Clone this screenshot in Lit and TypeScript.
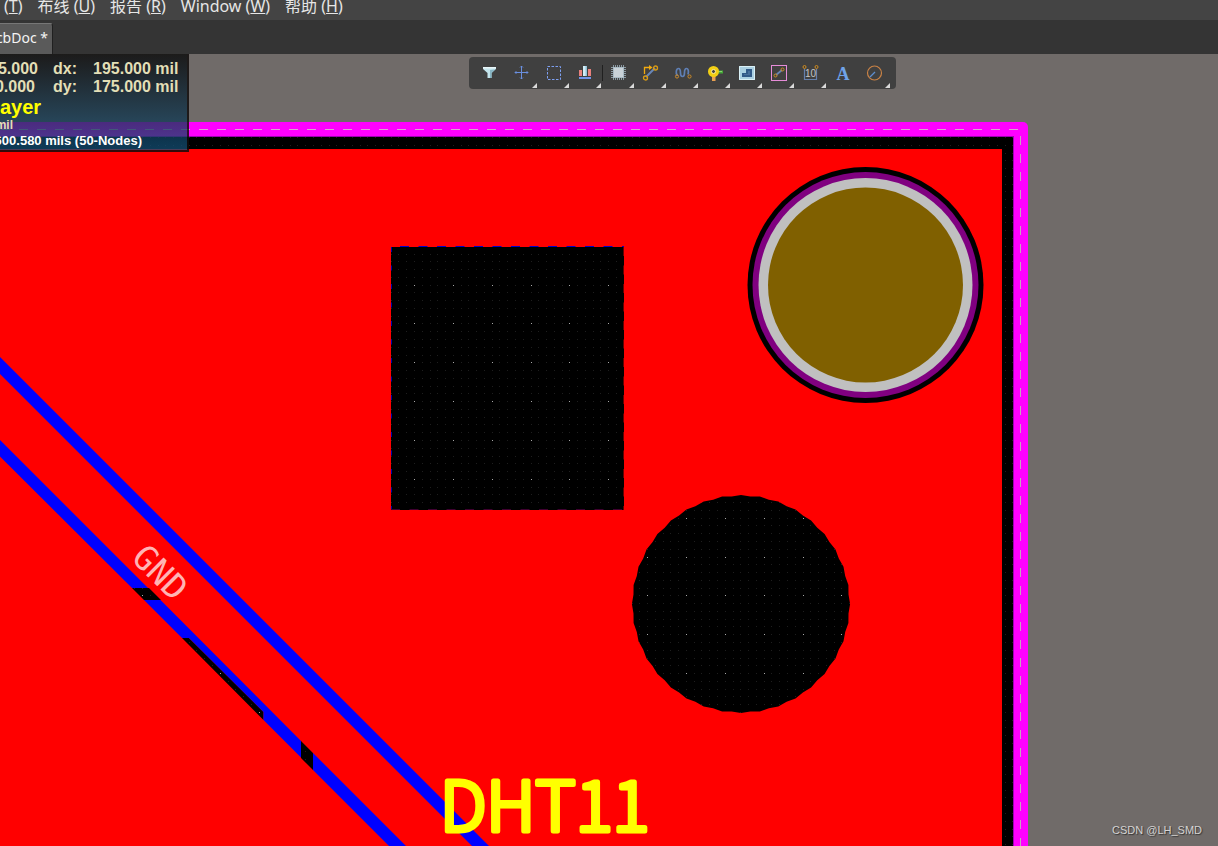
import { LitElement, html, svg, css } from "lit";
import { customElement } from "lit/decorators.js";

const GRID = 38.85;
const ORIGIN_X = 414.5;
const ORIGIN_Y = 285.1;

/** One-pixel marks for the snap grid; every fifth one is a major mark. */
function gridPath(major: boolean): string {
  let d = "";
  for (let i = -60; i <= 80; i++) {
    for (let j = -19; j <= 110; j++) {
      if ((i % 5 === 0 && j % 5 === 0) !== major) continue;
      const x = Math.floor(ORIGIN_X + (i * GRID) / 5);
      const y = Math.floor(ORIGIN_Y + (j * GRID) / 5);
      if (x < 0 || x > 1012) continue;
      d += `M${x} ${y}h1v1h-1z`;
    }
  }
  return d;
}

const MINOR = gridPath(false);
const MAJOR = gridPath(true);

/** Faceted outline of a round clearance. */
function facets(cx: number, cy: number, r: number, n: number): string {
  let d = "";
  for (let i = 0; i < n; i++) {
    const a = (i / n) * Math.PI * 2;
    const rr = i % 2 ? r - 0.6 : r + 0.6;
    d += `${i ? "L" : "M"}${(cx + rr * Math.cos(a)).toFixed(1)} ${(cy + rr * Math.sin(a)).toFixed(1)}`;
  }
  return d + "Z";
}

const HOLE = facets(741, 604, 108.5, 72);

@customElement("pcb-board")
class PcbBoard extends LitElement {
  static styles = css`
    :host { display: block; }
    svg { display: block; width: 100%; height: 100%; }
    .net { font: 34px "DejaVu Sans Mono", monospace; fill: #ffb4b4; }
    .silk {
      font: 300 69px "Noto Sans CJK SC", sans-serif;
      fill: #ff0;
      stroke: #ff0;
      stroke-width: 5px;
      stroke-linejoin: round;
    }
  `;
  render() {
    return html`<svg role="img" aria-label="PCB layout">
      <g transform="translate(0 -54)">
        <path d="M-20 122H1023a5 5 0 0 1 5 5V3000H-20z" fill="#f0f" />
        <path d="M-20 136H1014V3000H-20z" fill="#a000b4" />
        <path d="M-20 137H1013V3000H-20z" fill="#000" />
        <path d="M1 129.5H1020" stroke="#d9a6d0" stroke-dasharray="9 9" />
        <path d="M1020.5 136V3000" stroke="#c9a0c4" stroke-dasharray="9 9" />
        <path d=${MINOR} fill="#1e1e1e" shape-rendering="crispEdges" />
        <path d=${MAJOR} fill="#a8a8a8" shape-rendering="crispEdges" />
        <path fill="#f00" fill-rule="evenodd" d="M0 149H1002V3000H0z
          M391 247H624V510H391z
          M132 588H149L161 600H144z
          M182 638H189L263.500 712V720z
          M301 741V758L313 770V753z ${HOLE}" />
        <path d="M400 246.500H624" stroke="#00c" stroke-dasharray="9 9.500" />
        <path d="M391.500 247V510" stroke="#00a" stroke-dasharray="5 13.500" />
        <path d="M623.500 247V510" stroke="#600" stroke-dasharray="9 9.500" />
        <path d="M391 509.500H624" stroke="#400030" stroke-dasharray="9 9.500" />
        <g fill="#00f">
          <path d="M0 357L1000 1357V1374L0 374z" />
          <path d="M0 440L148 588H132L0 456.500z" />
          <path d="M160.500 600L301 741V757.500L263.500 720V712L189 638H182L144 600z" />
          <path d="M313 753L1000 1440V1457L313 770z" />
        </g>
        <g>
          <circle cx="865.500" cy="285" r="118" fill="#000" />
          <circle cx="865.500" cy="285" r="113" fill="#800080" />
          <circle cx="865.500" cy="285" r="107" fill="#c0c0c0" />
          <circle cx="865.500" cy="285" r="97.500" fill="#806000" />
        </g>
        <text class="net" transform="translate(130 559) rotate(45)">GND</text>
        <text class="silk" x="440" y="831">DHT11</text>
      </g>
    </svg>`;
  }
}

const ICONS: { name: string; menu: boolean; art: unknown }[] = [
  { name: "Selection filter", menu: false, art: svg`
    <path d="M2 3h13v2l-4.500 4v5h-4V9L2 5z" fill="#c3e4ec"/><path d="M2 3h13v1.500H2z" fill="#e9f6f9"/><path d="M9 6v8h1.500V9L14 5.500z" fill="#86b5c4"/>` },
  { name: "Move", menu: true, art: svg`
    <path d="M8.500 2v13M2 8.500h13" stroke="#6a8fe0"/><path d="M7 3.500l1.500-1.500L10 3.500M7 13.500l1.500 1.500 1.500-1.500M3.500 7L2 8.500 3.500 10M13.500 7L15 8.500 13.500 10" stroke="#6a8fe0" stroke-width=".8"/>` },
  { name: "Select area", menu: true, art: svg`
    <rect x="2.500" y="2.500" width="13" height="13" stroke="#7d9ff0" stroke-dasharray="2.500 1.500"/>` },
  { name: "Align", menu: true, art: svg`
    <path d="M2 6h3v6H2zM11 5h3v7h-3z" fill="#e9807c"/><path d="M6 2h4v10H6z" fill="#d3ecf5"/><path d="M8.500 2H10v10H8.500z" fill="#92c1d8"/><path d="M2 14h12" stroke="#7193e8" stroke-width="2"/>` },
  { name: "Place component", menu: true, art: svg`
    <path d="M3.500 1v15M5.500 1v15M7.500 1v15M9.500 1v15M11.500 1v15M13.500 1v15M1 3.500h15M1 5.500h15M1 7.500h15M1 9.500h15M1 11.500h15M1 13.500h15" stroke="#9eb1bd" stroke-width=".8"/><rect x="3.500" y="3.500" width="10" height="10" fill="#c9d2d8" stroke="#a9bac4"/>` },
  { name: "Interactive routing", menu: true, art: svg`
    <path d="M4 13l9-9" stroke="#6886b8" stroke-width="2"/><path d="M2.500 10V3.500H8" stroke="#f0aa10" stroke-width="1.300"/><path d="M7 1l3.500 2.500L7 6z" fill="#f0aa10"/><circle cx="3.500" cy="14" r="2" stroke="#d89a14" stroke-width="1.300"/><circle cx="13.500" cy="4" r="2" stroke="#d89a14" stroke-width="1.300"/>` },
  { name: "Length tuning", menu: true, art: svg`
    <path d="M3.500 12C1 9 2.500 4.500 4.500 4.500S6.500 7 6.500 9s.5 3.500 2 3.500 2-1.500 2-4 .5-4 2-4 2.500 2 1.500 6" stroke="#5f7fb4" stroke-width="1.700"/><circle cx="3" cy="12.500" r="1.600" stroke="#cc8a28"/><circle cx="15.500" cy="12.500" r="1.600" stroke="#cc8a28"/>` },
  { name: "Place via", menu: true, art: svg`
    <path d="M11 8h6" stroke="#44a938" stroke-width="3"/><path d="M12 7.500h4" stroke="#8ad070"/><path d="M6 11h3.500v6H6z" fill="#e8a050"/><circle cx="7.500" cy="7.500" r="5.500" fill="#f2cf14"/><circle cx="7.500" cy="7.500" r="2" fill="#454545" stroke="#fff09c"/>` },
  { name: "Place polygon", menu: true, art: svg`
    <path d="M1 2h16v14H1z" fill="#aad0e2"/><path d="M1.500 2.500h15v13h-15z" stroke="#d9f0f7"/><path d="M8 5h6v8H4V9h4z" fill="#315a88"/><path d="M10 7h2v4H6v-1h4z" fill="#48709c"/>` },
  { name: "Place region", menu: true, art: svg`
    <rect x="1.500" y="1.500" width="15" height="15" stroke="#e68cd8"/><path d="M6 11l6-5" stroke="#6684b4" stroke-width="1.800"/><circle cx="5.500" cy="11.500" r="1.500" stroke="#cf8c20"/><circle cx="12.500" cy="5.500" r="1.500" stroke="#cf8c20"/>` },
  { name: "Place dimension", menu: true, art: svg`
    <path d="M2.500 5v10.500h12V5" stroke="#657fac" stroke-width="1.200"/><circle cx="2.500" cy="3" r="1.500" stroke="#cf8c20"/><circle cx="14.500" cy="3" r="1.500" stroke="#cf8c20"/><text class="num" x="8.500" y="13" text-anchor="middle">10</text>` },
  { name: "Place text", menu: false, art: svg`<text class="letter" x="9" y="16" text-anchor="middle">A</text>` },
  { name: "Place arc", menu: true, art: svg`
    <circle cx="8.500" cy="9" r="7" stroke="#c98245" stroke-width="1.200"/><path d="M4 13l5-5" stroke="#5d8fd0" stroke-width="1.300"/>` },
];

@customElement("app-root")
class AppRoot extends LitElement {
  static styles = css`
    :host {
      display: flex;
      flex-direction: column;
      height: 100vh;
      overflow: hidden;
      background: #706b69;
      font-family: "Noto Sans", "Noto Sans CJK SC", sans-serif;
    }
    nav {
      display: flex;
      align-items: flex-start;
      gap: 15px;
      height: 20px;
      padding-left: 4px;
      background: #444;
      flex: none;
    }
    nav a {
      color: #e6e6e6;
      font-size: 16px;
      line-height: 12px;
      text-decoration: none;
      white-space: nowrap;
    }
    .tabs {
      display: flex;
      align-items: flex-end;
      height: 34px;
      background: #343434;
      flex: none;
    }
    .tab {
      display: flex;
      justify-content: flex-end;
      align-items: center;
      width: 53px;
      height: 31px;
      padding: 0 4px 3px 0;
      box-sizing: border-box;
      overflow: hidden;
      border: 0;
      border-top: 1px solid #777;
      border-right: 1px solid #202020;
      border-radius: 0 3px 0 0;
      background: #5a5a5a;
      color: #f4f4f4;
      font: 14px "Noto Sans", sans-serif;
      white-space: nowrap;
    }
    main {
      position: relative;
      flex: 1;
      min-height: 0;
      overflow: hidden;
    }
    pcb-board { width: 100%; height: 100%; }
    .hud {
      position: absolute;
      left: 0;
      top: 0;
      width: 189px;
      height: 98px;
      box-sizing: border-box;
      padding-top: 6px;
      border: solid rgba(15, 12, 12, 0.85);
      border-width: 0 2px 2px 0;
      background: linear-gradient(rgba(0, 0, 0, 0.75), rgba(20, 80, 118, 0.75)) padding-box;
      color: #e3dfb6;
      font: bold 16px "Liberation Sans", sans-serif;
      overflow: hidden;
    }
    .coords { display: grid; grid-template-columns: 53px 40px 1fr; line-height: 18px; white-space: nowrap; }
    .abs { display: flex; justify-content: flex-end; padding-right: 15px; }
    .abs.short { padding-right: 18px; }
    .layer { color: #ff0; font-size: 20px; line-height: 22px; }
    .snap { display: flex; justify-content: flex-end; width: 13px; font-size: 12px; line-height: 15px; }
    .object { display: flex; justify-content: flex-end; width: 142px; color: #fff; font-size: 13px; line-height: 15px; white-space: nowrap; }
    .toolbar {
      position: absolute;
      top: 3px;
      left: 50%;
      margin-left: -140px;
      display: flex;
      height: 32px;
      padding: 0 5px;
      border-radius: 4px;
      background: #404040;
    }
    .tool {
      position: relative;
      display: flex;
      width: 32px;
      height: 32px;
      padding: 7px 0 0 7px;
      border: 0;
      background: none;
    }
    .tool svg { width: 17px; height: 17px; fill: none; overflow: visible; }
    .menu::after {
      content: "";
      position: absolute;
      right: 1px;
      bottom: 1px;
      width: 5px;
      height: 5px;
      background: #dadada;
      clip-path: polygon(100% 0, 100% 100%, 0 100%);
    }
    .sep { width: 1px; height: 16px; margin: 8px 0; background: #202020; }
    .num { font: 10px "Liberation Sans", sans-serif; fill: #c4c4c4; }
    .letter { font: bold 18px "Liberation Serif", serif; fill: #6fa3e8; }
    .mark {
      position: absolute;
      right: 16px;
      bottom: 9px;
      color: #d5d3d2;
      font: 11px/14px "Liberation Sans", sans-serif;
      text-shadow: 1px 1px 1px #333;
    }
  `;
  render() {
    return html`
      <nav>
        <a href="#">(<u>T</u>)</a>
        <a href="#">布线 (<u>U</u>)</a>
        <a href="#">报告 (<u>R</u>)</a>
        <a href="#">Window (<u>W</u>)</a>
        <a href="#">帮助 (<u>H</u>)</a>
      </nav>
      <div class="tabs"><button class="tab">PcbDoc *</button></div>
      <main>
        <pcb-board></pcb-board>
        <div class="hud">
          <div class="coords">
            <span class="abs">5.000</span><span>dx:</span><span>195.000 mil</span>
            <span class="abs short">0.000</span><span>dy:</span><span>175.000 mil</span>
          </div>
          <div class="layer">ayer</div>
          <div class="snap">mil</div>
          <div class="object">600.580 mils (50-Nodes)</div>
        </div>
        <div class="toolbar" role="toolbar" aria-label="Active bar">
          ${ICONS.map((icon, i) => html`
            ${i === 4 ? html`<span class="sep"></span>` : ""}
            <button class="tool ${icon.menu ? "menu" : ""}" aria-label=${icon.name}>
              <svg viewBox="0 0 17 17">${icon.art}</svg>
            </button>`)}
        </div>
        <div class="mark">CSDN @LH_SMD</div>
      </main>
    `;
  }
}
